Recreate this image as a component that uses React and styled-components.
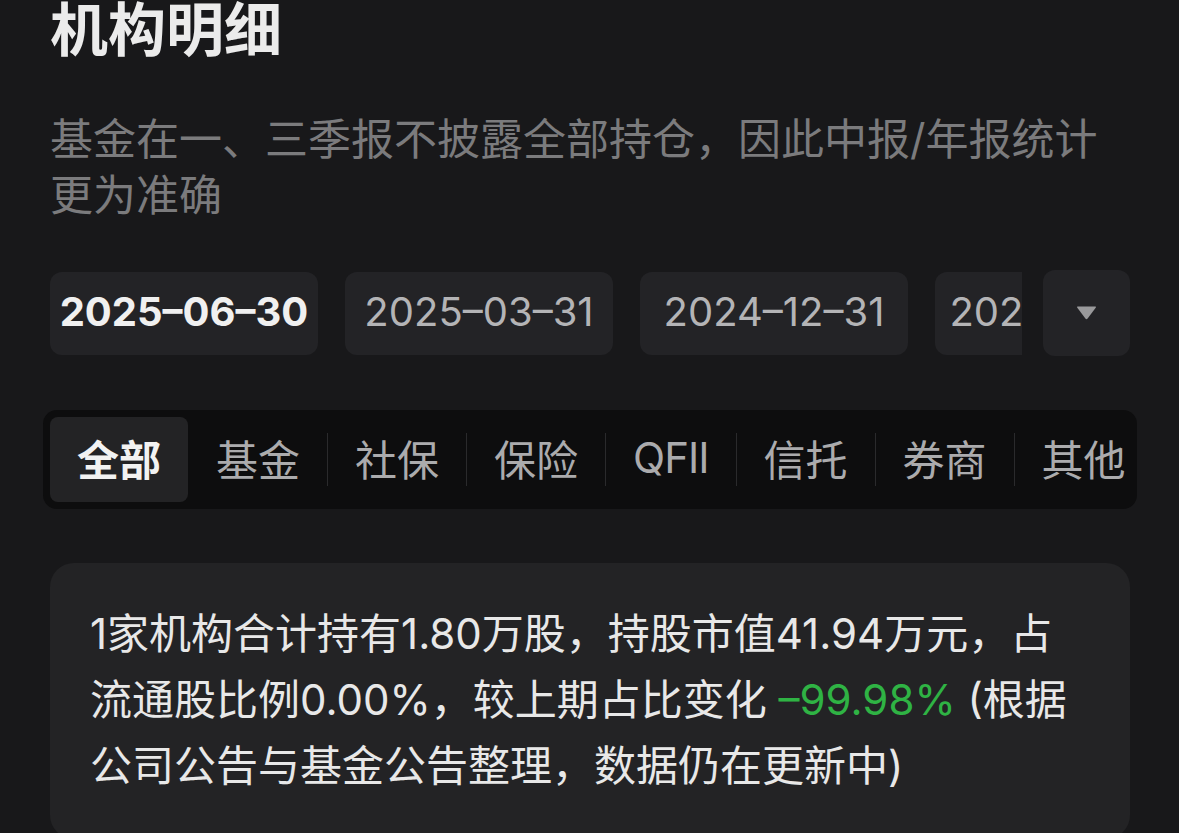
import React from "react";
import styled, { createGlobalStyle } from "styled-components";

const GlobalStyle = createGlobalStyle`
  html, body {
    margin: 0;
    padding: 0;
    background: #18181a;
  }
  body {
    font-family: Inter, "Noto Sans CJK SC", sans-serif;
    -webkit-font-smoothing: antialiased;
  }
`;

const Page = styled.div`
  padding: 0 49px 0 50px;
  height: 833px;
  overflow: hidden;
`;

const Title = styled.h1`
  margin: 0;
  font-size: 58px;
  line-height: 52px;
  font-weight: 700;
  color: #ebebeb;
  font-family: "Noto Sans CJK SC", sans-serif;
`;

const Note = styled.p`
  margin: 59px 0 0;
  font-size: 43px;
  line-height: 56px;
  color: #7b7b7d;
`;

const DateRow = styled.div`
  margin-top: 47px;
  display: flex;
  align-items: center;
  gap: 21px;
`;

const DateScroller = styled.div`
  flex: 1;
  display: flex;
  gap: 27px;
  overflow: hidden;
`;

const DateChip = styled.div`
  flex: 0 0 268px;
  height: 83px;
  box-sizing: border-box;
  padding-bottom: 3px;
  border-radius: 12px;
  background: #232326;
  display: flex;
  align-items: center;
  justify-content: center;
  font-size: 40px;
  font-weight: ${(p) => (p.$active ? 700 : 400)};
  color: ${(p) => (p.$active ? "#f0f0f0" : "#b4b4b6")};
  white-space: nowrap;
`;

const MoreButton = styled.div`
  flex: 0 0 87px;
  height: 86px;
  border-radius: 12px;
  background: #232326;
  display: flex;
  align-items: center;
  justify-content: center;
`;

const TabBar = styled.div`
  margin: 54px -7px 0;
  padding: 7px;
  border-radius: 14px;
  background: #0d0d0e;
  display: flex;
  align-items: center;
  overflow: hidden;
`;

const Tab = styled.div`
  flex: 0 0 auto;
  height: 85px;
  box-sizing: border-box;
  padding: 0 27px 5px;
  border-radius: 8px;
  display: flex;
  align-items: center;
  font-size: 42px;
  white-space: nowrap;
  background: ${(p) => (p.$active ? "#232325" : "transparent")};
  font-weight: ${(p) => (p.$active ? 700 : 400)};
  color: ${(p) => (p.$active ? "#f2f2f2" : "#ababad")};
  letter-spacing: ${(p) => (p.$latin ? "-1px" : "0")};
`;

const Divider = styled.span`
  flex: 0 0 1px;
  height: 53px;
  background: ${(p) => (p.$hidden ? "transparent" : "#2a2a2c")};
`;

const SummaryCard = styled.div`
  margin-top: 54px;
  padding: 38px 42px 40px 40px;
  border-radius: 24px;
  background: #232325;
  font-size: 42px;
  line-height: 66px;
  color: #e8e8e8;
`;

const Change = styled.span`
  color: #2fb344;
`;

const dates = ["2025–06–30", "2025–03–31", "2024–12–31", "2024–09–30"];
const tabs = ["全部", "基金", "社保", "保险", "QFII", "信托", "券商", "其他"];

export default function App() {
  const active = 0;
  return (
    <Page>
      <GlobalStyle />
      <Title>机构明细</Title>
      <Note>基金在一、三季报不披露全部持仓，因此中报/年报统计更为准确</Note>

      <DateRow>
        <DateScroller>
          {dates.map((d, i) => (
            <DateChip key={d} $active={i === 0}>
              {d}
            </DateChip>
          ))}
        </DateScroller>
        <MoreButton>
          <svg width="21" height="14" viewBox="0 0 21 14">
            <path
              d="M1.8 0.5 H19.2 Q20.6 0.5 19.7 1.8 L11.6 12.6 Q10.5 13.9 9.4 12.6 L1.3 1.8 Q0.4 0.5 1.8 0.5 Z"
              fill="#99999b"
            />
          </svg>
        </MoreButton>
      </DateRow>

      <TabBar>
        {tabs.map((t, i) => (
          <React.Fragment key={t}>
            {i > 0 && <Divider $hidden={i === active || i - 1 === active} />}
            <Tab $active={i === active} $latin={/^[A-Z]+$/.test(t)}>
              {t}
            </Tab>
          </React.Fragment>
        ))}
      </TabBar>

      <SummaryCard>
        1家机构合计持有1.80万股，持股市值41.94万元，占流通股比例0.00%，较上期占比变化{" "}
        <Change>–99.98%</Change> (根据公司公告与基金公告整理，数据仍在更新中)
      </SummaryCard>
    </Page>
  );
}
